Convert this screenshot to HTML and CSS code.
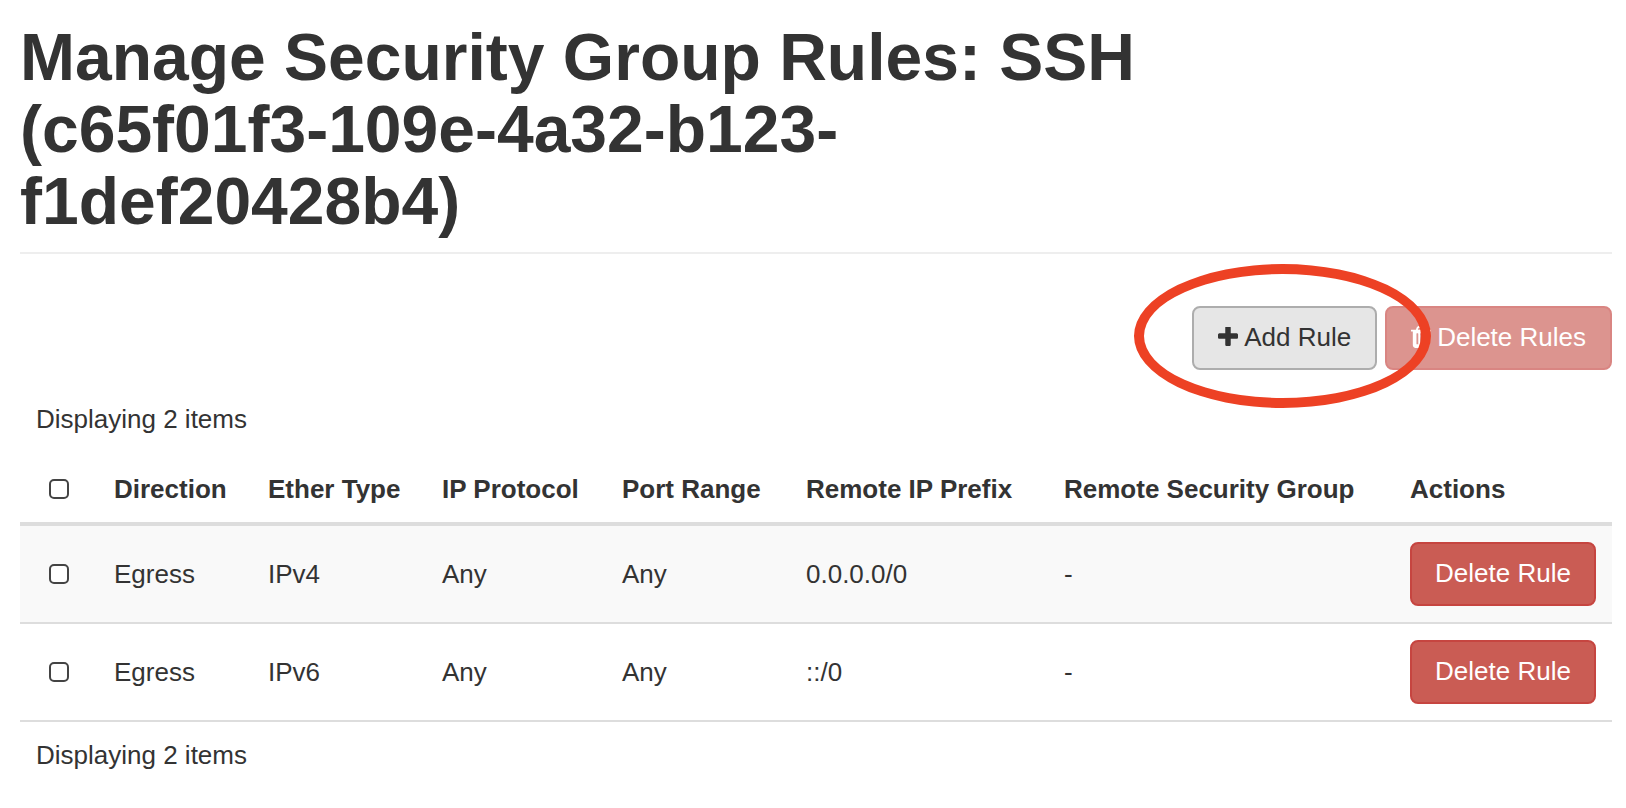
FILE: index.html
```html
<!DOCTYPE html>
<html lang="en">
<head>
<meta charset="utf-8">
<meta name="viewport" content="width=device-width, initial-scale=1">
<title>Manage Security Group Rules</title>
<link rel="stylesheet" href="styles.css">
</head>
<body>
<main class="page">
  <header class="page-header">
    <h1 class="page-title">Manage Security Group Rules: SSH (c65f01f3-109e-4a32-b123-f1def20428b4)</h1>
  </header>
  <div class="toolbar">
    <div class="highlighted">
      <button class="btn btn-default" type="button">
        <svg class="icon" width="20" height="20" viewBox="192 192 1408 1408" aria-hidden="true"><path d="M1600 736v192q0 40-28 68t-68 28h-416v416q0 40-28 68t-68 28h-192q-40 0-68-28t-28-68v-416h-416q-40 0-68-28t-28-68v-192q0-40 28-68t68-28h416v-416q0-40 28-68t68-28h192q40 0 68 28t28 68v416h416q40 0 68 28t28 68z"/></svg>
        <span>Add Rule</span>
      </button>
      <span class="ring" aria-hidden="true"></span>
    </div>
    <button class="btn btn-danger" type="button" disabled>
      <svg class="icon" width="20" height="22" viewBox="192 128 1408 1536" aria-hidden="true"><path d="M704 1376v-704q0-14-9-23t-23-9h-64q-14 0-23 9t-9 23v704q0 14 9 23t23 9h64q14 0 23-9t9-23zm256 0v-704q0-14-9-23t-23-9h-64q-14 0-23 9t-9 23v704q0 14 9 23t23 9h64q14 0 23-9t9-23zm256 0v-704q0-14-9-23t-23-9h-64q-14 0-23 9t-9 23v704q0 14 9 23t23 9h64q14 0 23-9t9-23zm-544-992h448l-48-117q-7-9-17-11h-317q-10 2-17 11zm928 32v64q0 14-9 23t-23 9h-96v948q0 83-47 143.5t-113 60.5h-832q-66 0-113-58.5t-47-141.5v-952h-96q-14 0-23-9t-9-23v-64q0-14 9-23t23-9h309l70-167q15-37 54-63t79-26h320q40 0 79 26t54 63l70 167h309q14 0 23 9t9 23z"/></svg>
      <span>Delete Rules</span>
    </button>
  </div>
  <p class="count">Displaying 2 items</p>
  <table class="rules">
    <colgroup>
      <col class="col-check"><col class="col-direction"><col class="col-ether"><col class="col-protocol">
      <col class="col-port"><col class="col-prefix"><col class="col-group"><col class="col-actions">
    </colgroup>
    <thead>
      <tr>
        <th class="check-cell"><input class="check" type="checkbox" aria-label="Select all rules"></th>
        <th scope="col">Direction</th>
        <th scope="col">Ether Type</th>
        <th scope="col">IP Protocol</th>
        <th scope="col">Port Range</th>
        <th scope="col">Remote IP Prefix</th>
        <th scope="col">Remote Security Group</th>
        <th scope="col">Actions</th>
      </tr>
    </thead>
    <tbody>
      <tr>
        <td class="check-cell"><input class="check" type="checkbox" aria-label="Select IPv4 egress rule"></td>
        <td>Egress</td>
        <td>IPv4</td>
        <td>Any</td>
        <td>Any</td>
        <td>0.0.0.0/0</td>
        <td>-</td>
        <td><button class="btn btn-danger btn-block" type="button">Delete Rule</button></td>
      </tr>
      <tr>
        <td class="check-cell"><input class="check" type="checkbox" aria-label="Select IPv6 egress rule"></td>
        <td>Egress</td>
        <td>IPv6</td>
        <td>Any</td>
        <td>Any</td>
        <td>::/0</td>
        <td>-</td>
        <td><button class="btn btn-danger btn-block" type="button">Delete Rule</button></td>
      </tr>
    </tbody>
  </table>
  <p class="count">Displaying 2 items</p>
</main>
</body>
</html>
```
FILE: styles.css
```css
* {
  box-sizing: border-box;
}

body {
  margin: 0;
  background: #fff;
  color: #333;
  font-family: "Liberation Sans", Arial, sans-serif;
  font-size: 26px;
  line-height: 36px;
}

.page {
  padding: 21px 14px 16px 20px;
}

.page-header {
  padding-bottom: 15px;
  border-bottom: 2px solid #eee;
}

.page-title {
  max-width: 75%;
  margin: 0;
  font-size: 66px;
  font-weight: 700;
  line-height: 72px;
}

.toolbar {
  display: flex;
  justify-content: flex-end;
  gap: 8px;
  margin: 52px 0 16px;
}

.highlighted {
  position: relative;
}

/* Hand-drawn style ring that calls out the Add Rule button. */
.ring {
  position: absolute;
  z-index: 1;
  top: -42px;
  left: -58px;
  width: 297px;
  height: 144px;
  border: 10px solid #ed4124;
  border-radius: 50%;
  pointer-events: none;
}

.btn {
  display: inline-flex;
  align-items: center;
  justify-content: center;
  gap: 6px;
  padding: 11px 24px 13px;
  border: 2px solid;
  border-radius: 8px;
  font: inherit;
  white-space: nowrap;
  cursor: pointer;
}

.btn-default {
  border-color: #adadad;
  background: #e6e6e6;
  color: #333;
}

.btn-danger {
  border-color: #c64540;
  background: #ca5c54;
  color: #fff;
}

.btn:disabled {
  opacity: 0.65;
  cursor: not-allowed;
}

.btn-block {
  display: flex;
  width: 100%;
  padding-right: 0;
  padding-left: 0;
}

.icon {
  flex: none;
  fill: currentColor;
}

.count {
  margin: 0;
  padding: 15px 16px 16px;
}

.rules {
  width: 100%;
  table-layout: fixed;
  border-spacing: 0;
}

.col-check { width: 78px; }
.col-direction { width: 154px; }
.col-ether { width: 174px; }
.col-protocol { width: 180px; }
.col-port { width: 184px; }
.col-prefix { width: 258px; }
.col-group { width: 346px; }
.col-actions { width: 218px; }

.rules th,
.rules td {
  padding: 16px;
  border-bottom: 2px solid #ddd;
  text-align: left;
  vertical-align: middle;
  white-space: nowrap;
}

.rules th {
  padding-top: 18px;
  padding-bottom: 15px;
  border-bottom-width: 4px;
}

.rules tbody tr:nth-child(odd) {
  background: #f9f9f9;
}

.rules .check-cell {
  text-align: center;
}

.check {
  display: block;
  width: 20px;
  height: 20px;
  margin: 0 auto;
  border: 2px solid #444;
  border-radius: 5px;
  background: #fff;
  appearance: none;
}
```
